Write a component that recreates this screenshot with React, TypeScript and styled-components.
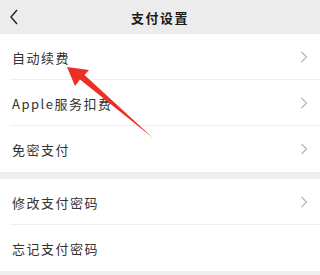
import * as React from "react";
import styled, { createGlobalStyle } from "styled-components";

const Global = createGlobalStyle`
  html, body {
    margin: 0;
    padding: 0;
    background: #efefef;
  }
  body {
    font-family: "Noto Sans CJK SC", "Liberation Sans", sans-serif;
  }
`;

const Screen = styled.div`
  position: relative;
  width: 320px;
  height: 275px;
  overflow: hidden;
  background: #efefef;
`;

const Header = styled.div`
  height: 34px;
  display: flex;
  align-items: center;
  justify-content: center;
  position: relative;
  background: #ececec;
`;

const Back = styled.div`
  position: absolute;
  left: 9px;
  top: 9px;
  width: 10px;
  height: 16px;
  display: flex;
`;

const Title = styled.h1`
  margin: 0;
  font-size: 13px;
  font-weight: 600;
  letter-spacing: 1.5px;
  color: #1a1a1a;
`;

const Group = styled.div<{ $gap?: number }>`
  background: #fff;
  margin-top: ${p => p.$gap ?? 0}px;
`;

const Row = styled.div<{ $last?: boolean }>`
  height: 46px;
  display: flex;
  align-items: center;
  justify-content: space-between;
  padding: 0 12px;
  position: relative;
  &::after {
    content: "";
    display: ${p => (p.$last ? "none" : "block")};
    position: absolute;
    left: 10px;
    right: 0;
    bottom: 0;
    height: 1px;
    background: #efefef;
  }
`;

const Label = styled.span`
  font-size: 13px;
  letter-spacing: 1.5px;
  color: #333;
`;

const Chevron = () => (
  <svg width="8" height="12" viewBox="0 0 8 12">
    <path d="M1.5 1 L6.5 6 L1.5 11" fill="none" stroke="#b5b5b5" strokeWidth="1.2" />
  </svg>
);

const Arrow = styled.svg`
  position: absolute;
  left: 0;
  top: 0;
  pointer-events: none;
`;

const top = [
  { label: "自动续费", more: true },
  { label: "Apple服务扣费", more: true },
  { label: "免密支付", more: true }
];

const bottom = [
  { label: "修改支付密码", more: true },
  { label: "忘记支付密码", more: false }
];

export default function App() {
  return (
    <Screen>
      <Global />
      <Header>
        <Back>
          <svg width="10" height="16" viewBox="0 0 10 16">
            <path d="M8 1 L2 8 L8 15" fill="none" stroke="#222" strokeWidth="1.4" />
          </svg>
        </Back>
        <Title>支付设置</Title>
      </Header>
      <Group>
        {top.map((r, i) => (
          <Row key={r.label} $last={i === top.length - 1}>
            <Label>{r.label}</Label>
            {r.more && <Chevron />}
          </Row>
        ))}
      </Group>
      <Group $gap={7}>
        {bottom.map((r, i) => (
          <Row key={r.label} $last={i === bottom.length - 1}>
            <Label>{r.label}</Label>
            {r.more && <Chevron />}
          </Row>
        ))}
      </Group>
      <Arrow width="320" height="275" viewBox="0 0 320 275">
        <path
          d="M67 67 L89 70 L84.5 75 L153 138 L80 79.5 L75 86 Z"
          fill="#ec2f24"
        />
      </Arrow>
    </Screen>
  );
}
